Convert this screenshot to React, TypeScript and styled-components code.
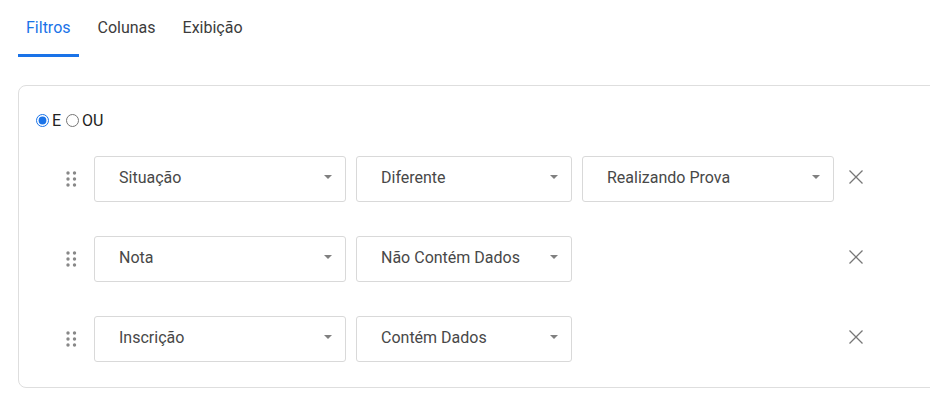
import React from "react";
import styled, { createGlobalStyle } from "styled-components";

const Global = createGlobalStyle`
  html, body { margin: 0; padding: 0; background: #fff; overflow: hidden; }
  body { font-family: Roboto, "Noto Sans", sans-serif; color: #333; }
`;

const Page = styled.div`
  padding: 0 0 0 18px;
  width: 960px;
`;

const Tabs = styled.div`
  display: flex;
  height: 57px;
  align-items: stretch;
`;

const Tab = styled.div<{ $active?: boolean }>`
  padding: 18px 8px 0;
  margin-right: 11px;
  font-size: 16px;
  line-height: 20px;
  color: ${(p) => (p.$active ? "#1a73e8" : "#3c3c3c")};
  box-sizing: border-box;
  border-bottom: 3px solid ${(p) => (p.$active ? "#1a73e8" : "transparent")};
`;

const Panel = styled.div`
  margin-top: 28px;
  border: 1px solid #dedede;
  border-radius: 8px;
  padding: 23px 0 25px 16px;
  width: 940px;
  box-sizing: border-box;
`;

const Logic = styled.div`
  display: flex;
  align-items: center;
  font-size: 16px;
  color: #222;
  height: 22px;
`;

const Radio = styled.input<{ $gap?: number }>`
  margin: 0 3px 0 ${(p) => p.$gap ?? 1}px;
  width: 13px;
  height: 13px;
  accent-color: #1a73e8;
`;

const Rows = styled.div`
  display: flex;
  flex-direction: column;
  gap: 34px;
  margin-top: 25px;
  padding-left: 31px;
`;

const Row = styled.div`
  display: flex;
  align-items: center;
  gap: 10px;
`;

const Handle = styled.div`
  width: 11px;
  margin-right: 7px;
  display: flex;
  justify-content: center;
`;

const Select = styled.div<{ $w: number }>`
  width: ${(p) => p.$w}px;
  height: 46px;
  box-sizing: border-box;
  border: 1px solid #d9d9d9;
  border-radius: 3px;
  display: flex;
  align-items: center;
  justify-content: space-between;
  padding: 0 13px 4px 24px;
  font-size: 16px;
  color: #484848;
`;

const Arrow = styled.span`
  width: 0;
  height: 0;
  border-left: 4px solid transparent;
  border-right: 4px solid transparent;
  border-top: 4px solid #808080;
`;

const Remove = styled.button<{ $offset: number }>`
  border: none;
  background: none;
  padding: 0 0 4px;
  margin-left: ${(p) => p.$offset}px;
  width: 18px;
  height: 22px;
  display: flex;
  align-items: center;
  justify-content: center;
  cursor: pointer;
`;

const DragIcon = () => (
  <svg width="11" height="16" viewBox="0 0 11 16">
    {[2, 8.5].map((x) => [2, 8, 14].map((y) => <circle key={`${x}-${y}`} cx={x} cy={y} r="1.7" fill="#888" />))}
  </svg>
);

const XIcon = () => (
  <svg width="16" height="16" viewBox="0 0 16 16">
    <path d="M1.5 1.5 L14.5 14.5 M14.5 1.5 L1.5 14.5" stroke="#777" strokeWidth="1.3" fill="none" />
  </svg>
);

const rows = [
  { sel: [["Situação", 252], ["Diferente", 216], ["Realizando Prova", 252]] as [string, number][] },
  { sel: [["Nota", 252], ["Não Contém Dados", 216]] as [string, number][] },
  { sel: [["Inscrição", 252], ["Contém Dados", 216]] as [string, number][] },
];

export default function App() {
  return (
    <Page>
      <Global />
      <Tabs>
        <Tab $active>Filtros</Tab>
        <Tab>Colunas</Tab>
        <Tab>Exibição</Tab>
      </Tabs>
      <Panel>
        <Logic>
          <Radio type="radio" name="logic" defaultChecked />
          <span>E</span>
          <Radio type="radio" name="logic" $gap={5} />
          <span>OU</span>
        </Logic>
        <Rows>
          {rows.map((r, i) => (
            <Row key={i}>
              <Handle>
                <DragIcon />
              </Handle>
              {r.sel.map(([label, w]) => (
                <Select key={label} $w={w}>
                  <span>{label}</span>
                  <Arrow />
                </Select>
              ))}
              <Remove $offset={r.sel.length === 3 ? 3 : 265}>
                <XIcon />
              </Remove>
            </Row>
          ))}
        </Rows>
      </Panel>
    </Page>
  );
}
